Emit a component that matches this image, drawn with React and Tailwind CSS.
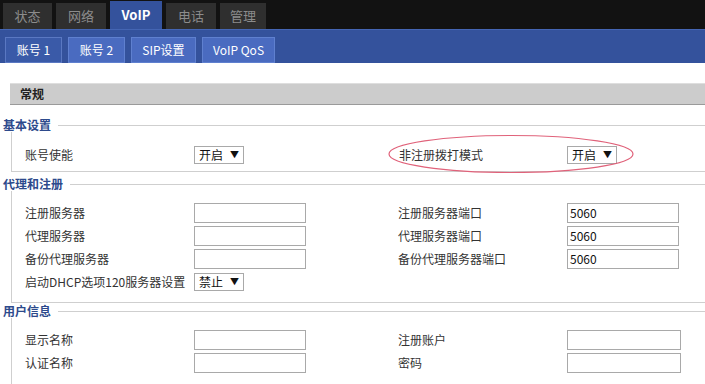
import React from 'react';

const TOP_TABS = [
  { label: '状态', w: 'w-[49px]' },
  { label: '网络', w: 'w-[50px]' },
  { label: 'VoIP', w: 'w-[52px]', active: true },
  { label: '电话', w: 'w-[50px]' },
  { label: '管理', w: 'w-[46px]' },
];

const SUB_TABS = [
  { label: '账号 1', w: 'w-[57px]', active: true },
  { label: '账号 2', w: 'w-[57px]' },
  { label: 'SIP设置', w: 'w-[65px]' },
  { label: 'VoIP QoS', w: 'w-[73px]' },
];

function TextBox({ value, wide }) {
  return (
    <div className={`h-[20px] ${wide ? 'w-[114px]' : 'w-[112px]'} border border-[#a9a9a9] bg-white px-[2px] text-[12px] leading-[18px] text-[#111]`}>
      {value}
    </div>
  );
}

function Select({ value }) {
  return (
    <div className="inline-flex h-[18px] items-center gap-[7px] border border-[#a9a9a9] bg-white px-[4px] text-[12px] leading-[16px] text-[#111]">
      <span>{value}</span>
      <span className="text-[9px]">▼</span>
    </div>
  );
}

function Legend({ title, children, pad }) {
  return (
    <div>
      <div className="flex h-[14px] items-center">
        <span className="pl-[3px] pr-[7px] text-[12px] font-bold leading-[14px] text-[#2d4a8c]">{title}</span>
        <div className="h-px flex-1 bg-[#cfcfcf]" />
      </div>
      <div className={`ml-[11px] border-b border-l border-[#cfcfcf] ${pad}`}>{children}</div>
    </div>
  );
}

function Row({ l1, c1, l2, c2 }) {
  return (
    <div className="flex h-[23px] items-center text-[12px] leading-[23px] text-[#333]">
      <div className="w-[182px] pl-[13px]">{l1}</div>
      <div className="w-[204px]">{c1}</div>
      <div className="w-[169px]">{l2}</div>
      <div>{c2}</div>
    </div>
  );
}

export default function App() {
  return (
    <div className="relative h-[384px] w-[705px] overflow-hidden bg-white" style={{ fontFamily: '"Noto Sans CJK SC", "Noto Sans", sans-serif' }}>
      {/* top nav */}
      <div className="flex h-[29px] items-end gap-[4px] bg-[#121212] pl-[3px]">
        {TOP_TABS.map((t) => (
          <div key={t.label}
            className={`flex items-center justify-center ${t.w} ${t.active ? 'h-[28px] bg-[#34529c] font-bold text-white' : 'h-[26px] bg-[#2f2f2f] text-[#8c8c8c]'} text-[13px]`}>
            {t.label}
          </div>
        ))}
      </div>

      {/* sub nav */}
      <div className="flex h-[34px] items-end gap-[6px] border-t border-[#4465b3] bg-[#34529c] pl-[5px]">
        {SUB_TABS.map((t) => (
          <div key={t.label}
            className={`flex h-[26px] items-center justify-center ${t.w} border ${t.active ? 'border-[#5a78c2] bg-[#3a5aa8]' : 'border-[#5f80cf] bg-[#4a6bc0]'} text-[12px] text-white`}>
            {t.label}
          </div>
        ))}
      </div>

      {/* section header */}
      <div className="ml-[10px] mt-[20px] flex h-[22px] items-center border-b border-t border-b-[#9a9a9a] border-t-[#dedede] bg-[#cccccc] pl-[10px] text-[12px] font-bold text-[#222]">
        常规
      </div>

      <div className="mt-[13px]">
        <Legend title="基本设置" pad="pt-[11px] pb-[5px]">
          <Row l1="账号使能" c1={<Select value="开启" />} l2={<span className="pl-[1px]">非注册拨打模式</span>} c2={<Select value="开启" />} />
        </Legend>

        <div className="mt-[5px]">
          <Legend title="代理和注册" pad="pt-[10px] pb-[9px]">
            <Row l1="注册服务器" c1={<TextBox />} l2="注册服务器端口" c2={<TextBox value="5060" />} />
            <Row l1="代理服务器" c1={<TextBox />} l2="代理服务器端口" c2={<TextBox value="5060" />} />
            <Row l1="备份代理服务器" c1={<TextBox />} l2="备份代理服务器端口" c2={<TextBox value="5060" />} />
            <Row l1="启动DHCP选项120服务器设置" c1={<Select value="禁止" />} />
          </Legend>
        </div>

        <div className="mt-[1px]">
          <Legend title="用户信息" pad="pt-[10px] pb-[10px]">
            <Row l1="显示名称" c1={<TextBox />} l2="注册账户" c2={<TextBox wide />} />
            <Row l1="认证名称" c1={<TextBox />} l2="密码" c2={<TextBox wide />} />
          </Legend>
        </div>
      </div>

      {/* red annotation ellipse */}
      <svg className="pointer-events-none absolute left-[386px] top-[133px]" width="250" height="42" viewBox="0 0 250 42">
        <ellipse cx="125" cy="21" rx="122" ry="18.5" fill="none" stroke="#e0627a" strokeWidth="1.2" />
      </svg>
    </div>
  );
}
